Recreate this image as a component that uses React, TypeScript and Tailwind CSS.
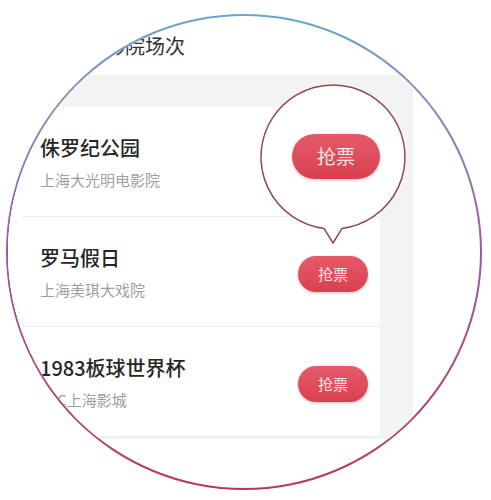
import React from "react";

const font = { fontFamily: '"Noto Sans CJK SC", "Noto Sans", sans-serif' };

function Btn({ big = false }: { big?: boolean }) {
  return (
    <div
      className={
        big
          ? "w-[88px] h-[45px] rounded-full bg-gradient-to-b from-[#e65a6a] to-[#d8404f] flex items-center justify-center text-[19px] text-[#fbe3e5] shadow-[0_1px_3px_rgba(180,40,60,0.35)]"
          : "w-[70px] h-[36px] rounded-full bg-gradient-to-b from-[#e65a6a] to-[#d8404f] flex items-center justify-center text-[15px] text-[#fbe3e5] shadow-[0_1px_3px_rgba(180,40,60,0.35)]"
      }
    >
      抢票
    </div>
  );
}

function Row({ title, sub, bubble = false }: { title: string; sub: string; bubble?: boolean }) {
  return (
    <div className="relative">
      <div className="h-[109px] flex justify-between">
        <div className="pl-[32px] pt-[27px]">
          <div className="text-[20px] leading-[28px] font-medium text-[#262626] whitespace-nowrap">{title}</div>
          <div className="mt-[7px] text-[15px] leading-[22px] text-[#a0a0a0] whitespace-nowrap">{sub}</div>
        </div>
        <div className="mt-[39px] mr-[12px]">
          {bubble ? <div className="w-[70px] h-[36px]" /> : <Btn />}
        </div>
      </div>
      <div className="ml-[14px] h-px bg-[#ededed]" />
      {bubble && (
        <div className="absolute left-[250px] top-[-25px] w-[150px] h-[166px]">
          <svg width="150" height="166" viewBox="0 0 150 166" className="absolute inset-0">
            <path
              d="M66 146.4 A72 72 0 1 1 84 146.4 L75 161 Z"
              fill="#ffffff"
              stroke="#8e4b4d"
              strokeWidth="1.5"
              strokeLinejoin="round"
            />
          </svg>
          <div className="absolute left-[34px] top-[52px]">
            <Btn big />
          </div>
        </div>
      )}
    </div>
  );
}

export default function App() {
  return (
    <div className="w-[491px] h-[500px] bg-white overflow-hidden" style={font}>
      <div className="ml-[6px] mt-[14px] w-[476px] h-[476px] rounded-full p-[2px] bg-gradient-to-b from-[#66a7c9] via-[#9b5a9e] to-[#b8394d]">
        <div className="w-full h-full rounded-full bg-white overflow-hidden relative">
          <div className="h-[59px] flex items-center pl-[97px] text-[20px] text-[#333333] whitespace-nowrap">
            影院场次
          </div>
          <div className="w-[405px] bg-[#f3f3f3] pt-[32px] pb-[2px]">
            <div className="w-[372px] bg-white">
              <Row title="侏罗纪公园" sub="上海大光明电影院" bubble />
              <Row title="罗马假日" sub="上海美琪大戏院" />
              <Row title="1983板球世界杯" sub="SFC上海影城" />
            </div>
          </div>
        </div>
      </div>
    </div>
  );
}
